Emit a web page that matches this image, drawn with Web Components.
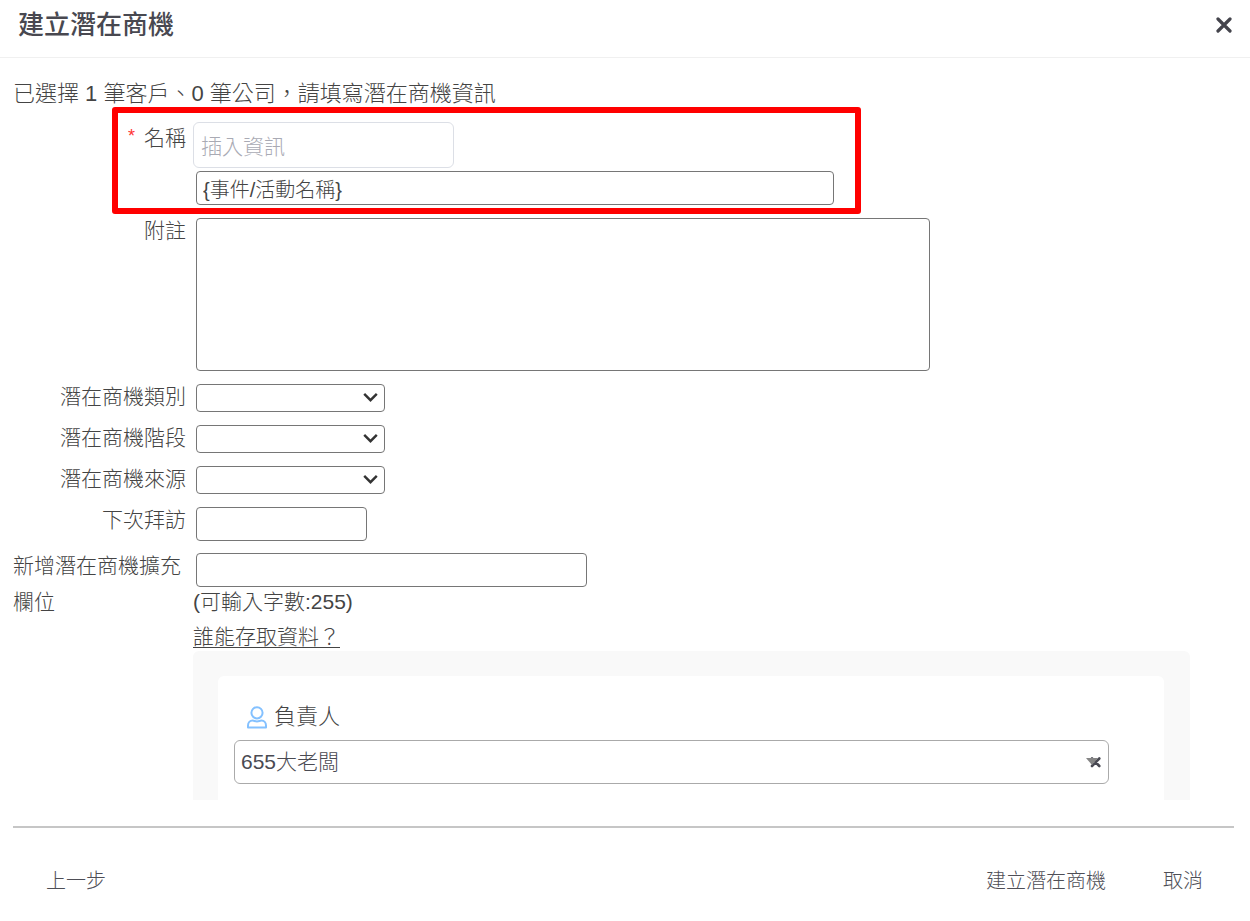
<!DOCTYPE html>
<html lang="zh-Hant">
<head>
<meta charset="utf-8">
<meta name="viewport" content="width=device-width, initial-scale=1">
<title>建立潛在商機</title>
<style>
  body {
    margin: 0;
    background: #fff;
    color: #444;
    font: 300 21px/36px "Liberation Sans", "Noto Sans CJK TC", sans-serif;
  }
  p { margin: 0; font-size: 22px; }
</style>
</head>
<body>
<lead-dialog heading="建立潛在商機">
  <p slot="summary">已選擇 1 筆客戶、0 筆公司，請填寫潛在商機資訊</p>
  <name-row label="名稱" value="{事件/活動名稱}" hint="插入資訊"></name-row>
  <note-row label="附註"></note-row>
  <select-row label="潛在商機類別"></select-row>
  <select-row label="潛在商機階段"></select-row>
  <select-row label="潛在商機來源"></select-row>
  <text-row label="下次拜訪" size="short"></text-row>
  <text-row label="新增潛在商機擴充欄位" size="medium">
    <div style="line-height:30px">(可輸入字數:255)</div>
    <access-panel></access-panel>
  </text-row>
</lead-dialog>

<script>
const ROW_CSS = `
  :host { display: block; }
  * { box-sizing: border-box; }
  .row {
    display: grid;
    grid-template-columns: 173px minmax(0, 1fr);
    column-gap: 7px;
    position: relative;
  }
  .label { display: flex; justify-content: flex-end; align-items: flex-start; }
  .field { padding: 5px 0 3px; }
  .control {
    display: block;
    max-width: 100%;
    height: 34px;
    margin: 0 3px;
    padding: 0 6px;
    border: 1px solid #767676;
    border-radius: 4px;
    background: #fff;
    color: #444;
    font: inherit;
    font-size: 20px;
    line-height: 30px;
  }
`;

class FormRow extends HTMLElement {
  connectedCallback() {
    if (this.shadowRoot) return;
    const label = this.getAttribute('label');
    this.attachShadow({ mode: 'open' }).innerHTML = `
      <style>${ROW_CSS}${this.css()}</style>
      <div class="row">
        <div class="label">${this.mark()}<label for="control">${label}</label></div>
        <div class="field">${this.control()}</div>
        ${this.overlay()}
      </div>`;
  }
  css() { return ''; }
  mark() { return ''; }
  overlay() { return ''; }
  control() { return ''; }
}

customElements.define('name-row', class extends FormRow {
  css() {
    return `
      .row { margin-top: 8px; }
      .field { padding-top: 2px; }
      .mark { color: #f33; font-size: 18px; line-height: 32px; margin-right: 9px; }
      .picker {
        display: block; width: 261px; height: 46px; margin-bottom: 3px; padding: 4px 7px 0;
        border: 1px solid #dcdfe6; border-radius: 6px; background: #fff;
        font: inherit; color: #444;
      }
      .picker::placeholder { color: #a9aab4; opacity: 1; }
      .control { width: 638px; }
      .frame {
        position: absolute; top: -13px; bottom: -6px; left: 99px;
        width: 749px; border: 6px solid #f00; border-radius: 3px; pointer-events: none;
      }`;
  }
  mark() { return '<span class="mark">*</span>'; }
  control() {
    return `
      <input class="picker" aria-label="插入資訊" placeholder="${this.getAttribute('hint')}">
      <input class="control" id="control" value="${this.getAttribute('value')}">`;
  }
  overlay() { return '<div class="frame"></div>'; }
});

customElements.define('note-row', class extends FormRow {
  css() { return '.control { width: 734px; height: 153px; resize: none; }'; }
  control() { return '<textarea class="control" id="control"></textarea>'; }
});

customElements.define('select-row', class extends FormRow {
  css() {
    return `
      .wrap { position: relative; width: 189px; margin: 0 3px; }
      .control { appearance: none; width: 100%; height: 28px; margin: 0; }
      svg { position: absolute; right: 7px; top: 8px; pointer-events: none; }`;
  }
  control() {
    return `<div class="wrap">
      <select class="control" id="control"><option></option></select>
      <svg width="15" height="11" viewBox="0 0 15 11" fill="none" stroke="#333" stroke-width="2.4"><path d="M1.2 1.8l6.3 6.4 6.3-6.4"/></svg>
    </div>`;
  }
});

customElements.define('text-row', class extends FormRow {
  css() {
    return `
      .field { padding-bottom: 2px; }
      .short { width: 171px; }
      .medium { width: 391px; }`;
  }
  control() {
    return `<input class="control ${this.getAttribute('size')}" id="control"><slot></slot>`;
  }
});

customElements.define('access-panel', class extends HTMLElement {
  connectedCallback() {
    if (this.shadowRoot) return;
    this.attachShadow({ mode: 'open' }).innerHTML = `
      <style>
        :host { display: block; }
        * { box-sizing: border-box; }
        .link { padding-top: 6px; line-height: 28px; }
        a { color: inherit; text-decoration: underline; text-underline-offset: 3px; text-decoration-thickness: 1px; }
        .panel { margin-right: 44px; padding: 25px 26px 0 25px; background: #f9f9f9; border-radius: 6px 6px 0 0; }
        .card { padding: 23px 55px 16px 16px; background: #fff; border-radius: 6px 6px 0 0; }
        .owner { display: flex; align-items: center; gap: 7px; padding-left: 13px; font-size: 22px; }
        .wrap { position: relative; margin-top: 5px; }
        select {
          appearance: none; display: block; width: 100%; height: 44px; padding: 0 6px;
          border: 1px solid #aaa; border-radius: 6px; background: #fff;
          font: inherit; color: #4a4a52;
        }
        .wrap svg { position: absolute; right: 8px; top: 17px; pointer-events: none; }
      </style>
      <div class="link"><a href="#access">誰能存取資料？</a></div>
      <div class="panel" id="access">
        <div class="card">
          <label class="owner" for="owner">
            <svg width="20" height="23" viewBox="0 0 20 23" fill="none" stroke="#84c1ff" stroke-width="2">
              <circle cx="10" cy="6.8" r="5.6"/>
              <path d="M1 21.6v-2.1c0-3 2-4.9 4.6-4.9 1.500 0 2.400.8 4.400.8s2.900-.8 4.400-.8c2.600 0 4.600 1.900 4.600 4.900v2.100z" stroke-linejoin="round"/>
            </svg>
            負責人
          </label>
          <div class="wrap">
            <select id="owner"><option>655大老闆</option></select>
            <svg width="15" height="11" viewBox="0 0 15 11">
              <path d="M6 1.500l7.300 7.500M13.300 1.500l-7.300 7.500" fill="none" stroke="#484852" stroke-width="2.600" stroke-linecap="round"/>
              <path d="M0 1h12L6 8z" fill="#858585"/>
            </svg>
          </div>
        </div>
      </div>`;
  }
});

customElements.define('lead-dialog', class extends HTMLElement {
  connectedCallback() {
    if (this.shadowRoot) return;
    const heading = this.getAttribute('heading');
    this.attachShadow({ mode: 'open' }).innerHTML = `
      <style>
        :host { display: flex; flex-direction: column; min-height: 100vh; }
        * { box-sizing: border-box; }
        header {
          display: flex; justify-content: space-between; align-items: center;
          padding: 7px 18px 14px 18px; border-bottom: 1px solid #f0f0f0;
        }
        h1 { margin: 0; font-size: 26px; line-height: 36px; font-weight: 500; color: #484850; }
        button {
          margin: 0; padding: 0; border: 0; background: none; cursor: pointer;
          font: inherit; font-size: 20px; color: #4e4e56;
        }
        .close { display: flex; }
        main { padding: 18px 16px 0 13px; }
        .rows { display: flex; flex-direction: column; gap: 5px; }
        footer {
          display: flex; align-items: center; gap: 57px;
          margin: 24px 16px 0 13px; padding: 35px 31px 22px 33px; border-top: 2px solid #c6c6c6;
        }
        footer button:first-child { margin-right: auto; }
      </style>
      <header>
        <h1>${heading}</h1>
        <button class="close" aria-label="關閉">
          <svg width="16" height="16" viewBox="0 0 16 16" fill="none" stroke="#44444c" stroke-width="3.200" stroke-linecap="round"><path d="M2 2l12 12M14 2L2 14"/></svg>
        </button>
      </header>
      <main>
        <slot name="summary"></slot>
        <div class="rows"><slot></slot></div>
      </main>
      <footer>
        <button>上一步</button>
        <button>${heading}</button>
        <button>取消</button>
      </footer>`;
  }
});
</script>
</body>
</html>
